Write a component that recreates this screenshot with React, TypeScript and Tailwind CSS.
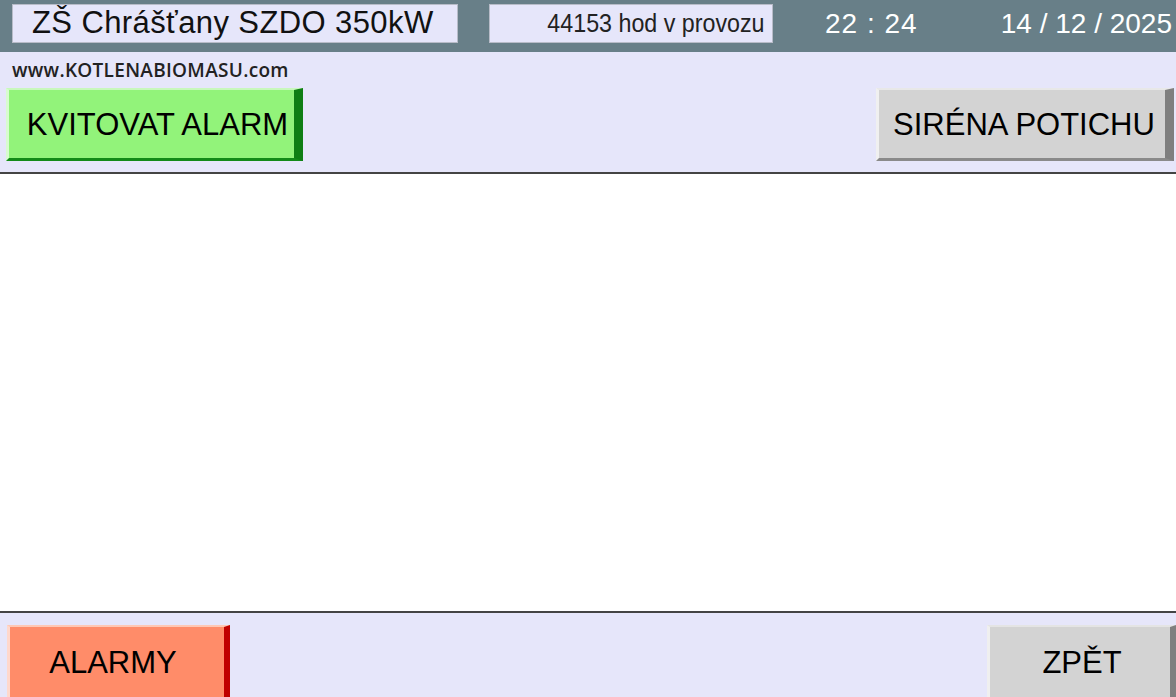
import React from "react";

const sans = { fontFamily: '"Liberation Sans", Arial, sans-serif' };

function Btn({
  label,
  className,
}: {
  label: string;
  className: string;
}) {
  return (
    <div
      className={`flex items-center justify-center text-[31px] leading-none text-black ${className}`}
      style={sans}
    >
      {label}
    </div>
  );
}

export default function App() {
  return (
    <div className="w-[1176px] h-[697px] bg-[#e6e6fa] flex flex-col overflow-hidden">
      {/* header */}
      <div className="h-[52px] bg-[#687f88] flex items-start pt-[4px] shrink-0">
        <div
          className="ml-[12px] w-[446px] h-[39px] bg-[#e6e6fa] border border-[#b8bcc8] flex items-center pl-[19px] text-[31px] tracking-[0.4px] text-[#111]"
          style={sans}
        >
          ZŠ Chrášťany SZDO 350kW
        </div>
        <div
          className="ml-[31px] w-[284px] h-[39px] bg-[#e6e6fa] border border-[#b8bcc8] flex items-center justify-end pr-[7px] text-[#222]"
          style={sans}
        >
          <span className="inline-block text-[25px] leading-none origin-right scale-x-[0.93] whitespace-nowrap">
            44153 hod v provozu
          </span>
        </div>
        <div
          className="ml-[52px] h-[39px] flex items-center text-[28px] text-white whitespace-pre tracking-[1px]"
          style={sans}
        >
          22 : 24
        </div>
        <div
          className="ml-auto mr-[4px] h-[39px] flex items-center text-[28px] text-white whitespace-pre"
          style={sans}
        >
          14 / 12 / 2025
        </div>
      </div>

      {/* website */}
      <div
        className="h-[36px] pl-[12px] pt-[4px] text-[19px] font-semibold tracking-[0.3px] text-[#222] shrink-0"
        style={{ fontFamily: '"Open Sans", "Noto Sans", sans-serif' }}
      >
        www.KOTLENABIOMASU.com
      </div>

      {/* top buttons */}
      <div className="flex justify-between pl-[6px] pr-[2px] shrink-0">
        <Btn
          label="KVITOVAT ALARM"
          className="w-[297px] h-[73px] bg-[#92f37a] border-l-[3px] border-t-[2px] border-l-[#d8fbd0] border-t-[#c8f8bc] border-r-[9px] border-r-[#0f7e14] border-b-[3px] border-b-[#138a18] pl-[12px]"
        />
        <Btn
          label="SIRÉNA POTICHU"
          className="w-[298px] h-[73px] bg-[#d3d3d3] border-l-[3px] border-t-[2px] border-l-[#f0f0f0] border-t-[#e8e8e8] border-r-[9px] border-r-[#7f7f7f] border-b-[3px] border-b-[#8a8a8a] pl-[4px]"
        />
      </div>

      {/* divider + white area */}
      <div className="mt-[11px] h-[2px] bg-[#444] shrink-0" />
      <div className="h-[437px] bg-white shrink-0" />
      <div className="h-[2px] bg-[#444] shrink-0" />

      {/* bottom buttons */}
      <div className="flex justify-between pl-[7px] mt-[12px]">
        <Btn
          label="ALARMY"
          className="w-[223px] h-[80px] bg-[#ff8c69] border-l-[3px] border-t-[2px] border-l-[#ffd8cc] border-t-[#ffc8b4] border-r-[6px] border-r-[#c00000] pb-[8px] pr-[8px]"
        />
        <Btn
          label="ZPĚT"
          className="w-[189px] h-[80px] bg-[#d3d3d3] border-l-[3px] border-t-[2px] border-l-[#efefef] border-t-[#e4e4e4] border-r-[6px] border-r-[#7f7f7f] pb-[8px] pl-[4px]"
        />
      </div>
    </div>
  );
}
